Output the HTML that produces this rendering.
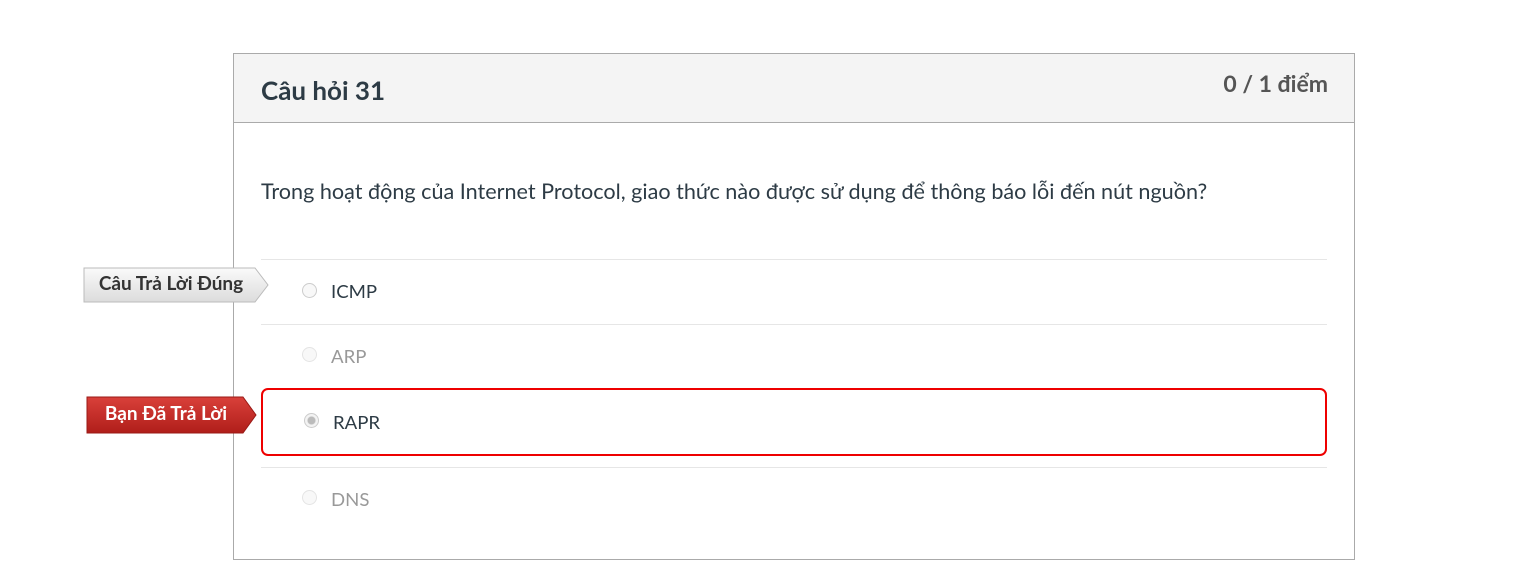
<!DOCTYPE html>
<html><head><meta charset="utf-8"><style>
body{margin:0;width:1521px;height:582px;background:#fff;font-family:"Lato","Liberation Sans",sans-serif;color:#2d3b45;position:relative;overflow:hidden}
.box{position:absolute;left:233px;top:53px;width:1120px;height:505px;border:1px solid #aaa}
.hdr{height:68px;background:#f4f4f4;border-bottom:1px solid #aaa;position:relative}
.t{position:absolute;left:27px;top:20px;font-size:26px;font-weight:bold;color:#2d3b45}
.pts{position:absolute;right:26px;top:15px;font-size:23px;font-weight:bold;color:#555}
.q{position:absolute;left:261px;top:178px;font-size:21.6px;color:#2d3b45}
.line{position:absolute;left:261px;width:1066px;height:1px;background:#e6e6e6}
.opt{position:absolute;font-size:18.6px}
.rad{position:absolute;width:13px;height:13px;border:1px solid #ccc;border-radius:50%;background:#f8f8f8}
.red{position:absolute;left:261px;top:388px;width:1062px;height:64px;border:2px solid #e00;border-radius:7px}
.lab{position:absolute;font-weight:bold;font-size:19px;text-align:center;white-space:nowrap}
</style></head><body>
<div class="box"><div class="hdr"><div class="t">Câu hỏi 31</div><div class="pts">0 / 1 điểm</div></div></div>
<div class="q">Trong hoạt động của Internet Protocol, giao thức nào được sử dụng để thông báo lỗi đến nút nguồn?</div>
<div class="line" style="top:259px"></div>
<div class="line" style="top:324px"></div>
<div class="line" style="top:467px"></div>
<div class="rad" style="left:302px;top:283px"></div><div class="opt" style="left:331px;top:280px">ICMP</div>
<div class="rad" style="left:302px;top:347px;border-color:#e4e4e4"></div><div class="opt" style="left:331px;top:345px;color:#999">ARP</div>
<div class="red"></div>
<div class="rad" style="left:304px;top:413px;background:radial-gradient(circle,#bbb 0 3.5px,#f3f3f3 4.5px)"></div><div class="opt" style="left:333px;top:411px">RAPR</div>
<div class="rad" style="left:302px;top:490px;border-color:#e4e4e4"></div><div class="opt" style="left:331px;top:488px;color:#999">DNS</div>
<svg style="position:absolute;left:83px;top:267px" width="187" height="37"><defs><linearGradient id="g" x1="0" y1="0" x2="0" y2="1"><stop offset="0" stop-color="#fafafa"/><stop offset="1" stop-color="#dcdcdc"/></linearGradient></defs><path d="M1 1H172L185 18L172 35H1Z" fill="url(#g)" stroke="#bbb"/></svg>
<div class="lab" style="left:84px;top:272px;width:174px;color:#333">Câu Trả Lời Đúng</div>
<svg style="position:absolute;left:86px;top:396px" width="172" height="39"><defs><linearGradient id="r" x1="0" y1="0" x2="0" y2="1"><stop offset="0" stop-color="#d9403a"/><stop offset="1" stop-color="#b01e1a"/></linearGradient></defs><path d="M1 1H157L170 19L157 37H1Z" fill="url(#r)" stroke="#9a1a16"/></svg>
<div class="lab" style="left:87px;top:402px;width:158px;color:#fff">Bạn Đã Trả Lời</div>
</body></html>
